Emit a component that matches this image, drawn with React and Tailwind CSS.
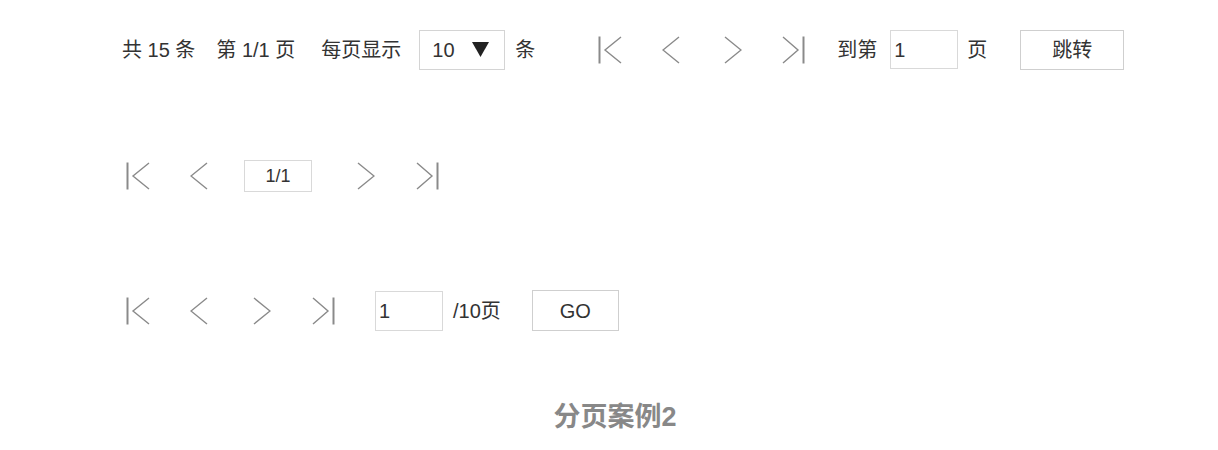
import React from 'react';

// Pager icons drawn as thin gray strokes
const First = () => (
  <svg width="24" height="28" viewBox="0 0 24 28" className="shrink-0">
    <line x1="1.5" y1="0.5" x2="1.5" y2="27.5" stroke="#8a8a8a" strokeWidth="2" />
    <polyline points="23,1 7,14 23,27" fill="none" stroke="#8a8a8a" strokeWidth="1.4" />
  </svg>
);

const Prev = () => (
  <svg width="18" height="28" viewBox="0 0 18 28" className="shrink-0">
    <polyline points="17,1 1,14 17,27" fill="none" stroke="#8a8a8a" strokeWidth="1.4" />
  </svg>
);

const Next = () => (
  <svg width="18" height="28" viewBox="0 0 18 28" className="shrink-0">
    <polyline points="1,1 17,14 1,27" fill="none" stroke="#8a8a8a" strokeWidth="1.4" />
  </svg>
);

const Last = () => (
  <svg width="23" height="28" viewBox="0 0 23 28" className="shrink-0">
    <polyline points="1,1 16,14 1,27" fill="none" stroke="#8a8a8a" strokeWidth="1.4" />
    <line x1="21.5" y1="0.5" x2="21.5" y2="27.5" stroke="#8a8a8a" strokeWidth="2" />
  </svg>
);

export default function App() {
  return (
    <div
      className="w-[1218px] h-[450px] bg-white text-[#333] text-[20px] pl-[122px] pt-[29px]"
      style={{ fontFamily: '"Liberation Sans", "Noto Sans CJK SC", sans-serif' }}
    >
      {/* Row 1: full pager */}
      <div className="flex items-center h-[41px] whitespace-pre">
        <span>共 15 条</span>
        <span className="ml-[21px]">第 1/1 页</span>
        <span className="ml-[26px]">每页显示</span>
        <div className="ml-[18px] w-[86px] h-[40px] border border-[#d4d4d4] flex items-center pl-[12px] pr-[15px] justify-between">
          <span>10</span>
          <svg width="17" height="15" viewBox="0 0 17 15">
            <polygon points="0,0 17,0 8.5,15" fill="#222" />
          </svg>
        </div>
        <span className="ml-[10px]">条</span>
        <div className="ml-[63px] flex items-center">
          <First />
          <span className="ml-[40px]"><Prev /></span>
          <span className="ml-[44px]"><Next /></span>
          <span className="ml-[40px]"><Last /></span>
        </div>
        <span className="ml-[32px]">到第</span>
        <div className="ml-[13px] w-[68px] h-[39px] border border-[#d9d9d9] flex items-center pl-[3px]">1</div>
        <span className="ml-[9px]">页</span>
        <button className="ml-[33px] w-[104px] h-[40px] border border-[#cfcfcf] bg-white">跳转</button>
      </div>

      {/* Row 2: compact pager */}
      <div className="flex items-center h-[32px] mt-[90px] pl-[4px]">
        <First />
        <span className="ml-[40px]"><Prev /></span>
        <div className="ml-[36px] w-[68px] h-[32px] border border-[#d9d9d9] flex items-center justify-center text-[18px]">1/1</div>
        <span className="ml-[45px]"><Next /></span>
        <span className="ml-[41px]"><Last /></span>
      </div>

      {/* Row 3: pager with GO */}
      <div className="flex items-center h-[41px] mt-[98px] pl-[4px]">
        <First />
        <span className="ml-[40px]"><Prev /></span>
        <span className="ml-[45px]"><Next /></span>
        <span className="ml-[41px]"><Last /></span>
        <div className="ml-[40px] w-[68px] h-[40px] border border-[#d9d9d9] flex items-center pl-[3px]">1</div>
        <span className="ml-[10px]">/10页</span>
        <button className="ml-[31px] w-[87px] h-[41px] border border-[#cfcfcf] bg-white">GO</button>
      </div>

      <div className="-ml-[110px] mt-[70px] text-center text-[27px] leading-[32px] font-bold text-[#888]">分页案例2</div>
    </div>
  );
}
